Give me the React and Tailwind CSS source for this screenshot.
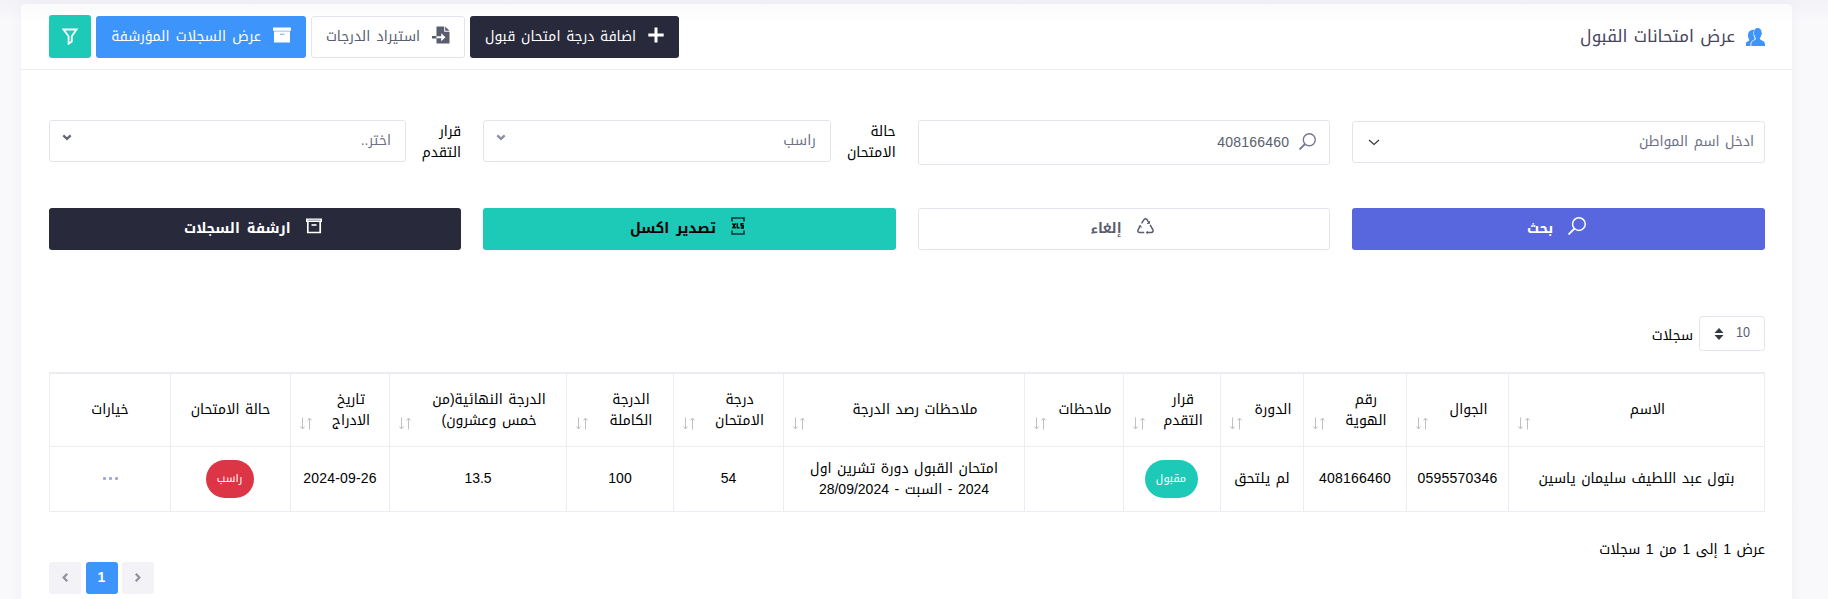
const columns = [
  { label: ["الاسم"], sort: true, width: "w-[256px]" },
  { label: ["الجوال"], sort: true, width: "w-[102px]" },
  { label: ["رقم", "الهوية"], sort: true, width: "w-[103px]" },
  { label: ["الدورة"], sort: true, width: "w-[83px]" },
  { label: ["قرار", "التقدم"], sort: true, width: "w-[97px]" },
  { label: ["ملاحظات"], sort: true, width: "w-[99px]" },
  { label: ["ملاحظات رصد الدرجة"], sort: true, width: "w-[241px]" },
  { label: ["درجة", "الامتحان"], sort: true, width: "w-[110px]" },
  { label: ["الدرجة", "الكاملة"], sort: true, width: "w-[107px]" },
  { label: ["الدرجة النهائية(من", "خمس وعشرون)"], sort: true, width: "w-[177px]" },
  { label: ["تاريخ", "الادراج"], sort: true, width: "w-[99px]" },
  { label: ["حالة الامتحان"], sort: false, width: "w-[120px]" },
  { label: ["خيارات"], sort: false, width: "w-[121px]" },
];

function UsersIcon() {
  return (
    <svg width="19" height="18" viewBox="0 0 19 18" fill="#3d94fb">
      <path d="M6 2c1-.4 1.700-.3 2.300 0C7.300 3.500 7.100 5.500 7.700 7.700c.3 1.300.8 2 1.100 2.700-.3 1.700-3.600 1.900-4.300 5V18H0v-2.400c0-2 3-2.200 3.400-3.500C2.500 11 2.200 9.500 2 8 1.700 5 3 2.600 6 2z" />
      <path d="M11.500 0c2.600 0 4 1.700 4 4.300 0 .4.500.6.400 1.400-.1.800-.5 1.300-.8 1.500-.3 1.500-.8 2.500-1.300 3.200.2 2.200 5.200 2 5.200 5.500V18H5.300v-2.100c0-3.300 4.300-3.400 4.600-5.500-.6-.7-1.100-1.800-1.300-3.200-.4-.2-.7-.7-.8-1.500-.1-.8.200-1 .3-1.400C8 1.700 9.400 0 11.500 0z" />
    </svg>
  );
}

function SearchIcon({ size = 17 }) {
  return (
    <svg width={size} height={size} viewBox="0 0 17 17" fill="none" stroke="currentColor" strokeWidth="1.400">
      <circle cx="10.300" cy="6.700" r="6" />
      <path d="M6 11L.5 16.500" strokeWidth="1.800" />
    </svg>
  );
}

function PlusIcon() {
  return (
    <svg width="16" height="16" viewBox="0 0 16 16" stroke="white" strokeWidth="3">
      <path d="M8 .5v15M.3 8h15.400" />
    </svg>
  );
}

function ImportIcon() {
  return (
    <svg width="18" height="18" viewBox="0 0 18 18" fill="#595d6e">
      <path d="M4.500.5h7.700v5.300H17.500V17.500h-13z" />
      <path d="M13.200.5l4.300 4.300h-4.300z" />
      <path d="M0 10h4.500v2.500H0z" />
      <path d="M4.500 10.200h4.700V7.200l4.300 4-4.300 4v-2.900H4.500z" fill="white" />
    </svg>
  );
}

function BoxSolidIcon() {
  return (
    <svg width="18" height="16" viewBox="0 0 18 16">
      <path d="M0 .5h18v3.300H0z" fill="white" />
      <path d="M1 4h16v1.200H1z" fill="#b9d8fe" />
      <path d="M1 5h16v10.500H1z" fill="white" />
      <path d="M7 6.600h4.500v1.500H7z" fill="#8fc0fd" />
    </svg>
  );
}

function BoxOutlineIcon() {
  return (
    <svg width="16" height="16" viewBox="0 0 16 16">
      <path d="M0 .5h16v3.500H0z" fill="white" />
      <path d="M1.500 2.200h13" stroke="#898b95" strokeWidth="1" />
      <path d="M1.800 3.500v11h12.400v-11" fill="none" stroke="white" strokeWidth="1.700" />
      <path d="M5.500 7h5" stroke="white" strokeWidth="1.600" />
    </svg>
  );
}

function FunnelIcon() {
  return (
    <svg width="16" height="17" viewBox="0 0 16 17" fill="none" stroke="white" strokeWidth="1.800">
      <path d="M1.500 1.500h13L9.800 8.200v5.300L6.600 15.800V8.200z" />
    </svg>
  );
}

function RecycleIcon() {
  return (
    <svg width="17" height="16" viewBox="0 0 17 16" fill="none" stroke="#595d6e" strokeWidth="1.500">
      <path d="M4.600 5.400L7 1.600Q8.500-.2 10 1.600l2 3.300" />
      <path d="M13.100 6.900l2.700 4.600q1 2.300-1.300 3H9.300" />
      <path d="M7.200 14.500H2.500Q0 14 1.200 11.600l2.300-3.900" />
      <path d="M12.500 3v2.500H10M10.800 13l-1.500 1.500 1.500 1.300M1.700 8.400l2-.8.600 2.100" strokeWidth="0.900" />
    </svg>
  );
}

function XlsIcon() {
  return (
    <svg width="14" height="18" viewBox="0 0 14 18" fill="none" stroke="#14333a">
      <path d="M1 4.500V1h12v3.500M1 13.500V17h12v-3.500" strokeWidth="1.600" />
      <path d="M1.600 6.300l2.900 5M4.500 6.300l-2.900 5M6.300 6.300v4.500h2.200M12.600 6.800h-2.400v2h2v2.100H9.700" strokeWidth="1.500" stroke="black" />
    </svg>
  );
}

function Chevron({ className }) {
  return (
    <svg width="10" height="7" viewBox="0 0 10 7" fill="none" stroke="currentColor" strokeWidth="2.300" className={className}>
      <path d="M1.300 1.300L5 4.800l3.700-3.500" />
    </svg>
  );
}

function SortIcon() {
  return (
    <svg width="12" height="13" viewBox="0 0 12 13" fill="none" className="absolute bottom-[16px] left-[9px]">
      <path d="M2.500.5v11M.5 9.500l2 2.500 2-2.500" stroke="#bfbfc4" />
      <path d="M9.500 12.500V1.500M7.500 3.500l2-2.500 2 2.500" stroke="#bfbfc4" />
    </svg>
  );
}

function HeaderButton({ className, icon, children }) {
  return (
    <button className={`flex h-[42px] items-center justify-center gap-3 rounded-[3px] ${className}`}>
      <span className="-mt-[4px]">{icon}</span>
      <span className="-mt-[2px]">{children}</span>
    </button>
  );
}

function ActionButton({ className, icon, children }) {
  return (
    <button className={`flex h-[42px] items-center justify-center gap-[15px] rounded-[3px] pr-[4px] font-bold [word-spacing:3px] ${className}`}>
      <span className="-mt-[6px]">{icon}</span>
      <span className="-mt-[2px]">{children}</span>
    </button>
  );
}

function Cell({ children }) {
  return <td className="border border-[#ebedf2] p-0 text-center align-middle">{children}</td>;
}

export default function App() {
  return (
    <div
      dir="rtl"
      className="h-[599px] overflow-hidden bg-[#f9f9fc] bg-gradient-to-b from-[#f2f2f7] to-[#f9f9fc] to-[20px] pt-1 pr-9 pl-[21px] font-['Liberation_Sans','Noto_Kufi_Arabic','DejaVu_Sans',sans-serif] text-[14px] leading-[21px] text-black [word-spacing:1.6px]"
    >
      <div className="h-[640px] rounded bg-gradient-to-b from-[#fbfbfc] to-white to-[22px] shadow-[0_0_13px_0_rgba(82,63,105,0.05)]">
        <header className="flex h-[66px] items-start justify-between border-b border-[#ebedf2] pr-[27px] pl-7">
          <div className="flex items-center gap-[11px] pt-[22px]">
            <UsersIcon />
            <h1 className="text-[17px] text-[#48465b]">عرض امتحانات القبول</h1>
          </div>
          <div className="flex items-end gap-[5px] pt-[11px]">
            <HeaderButton className="w-[209px] bg-[#282a3c] text-white [word-spacing:1.8px]" icon={<PlusIcon />}>اضافة درجة امتحان قبول</HeaderButton>
            <HeaderButton className="w-[154px] border border-[#e2e5ec] bg-white text-[#595d6e] [word-spacing:2.4px]" icon={<ImportIcon />}>استيراد الدرجات</HeaderButton>
            <HeaderButton className="w-[210px] bg-[#3d94fb] text-white [word-spacing:2.4px]" icon={<BoxSolidIcon />}>عرض السجلات المؤرشفة</HeaderButton>
            <button className="flex h-[43px] w-[42px] items-center justify-center rounded-[3px] bg-[#1dc9b7]">
              <FunnelIcon />
            </button>
          </div>
        </header>

        <main className="pr-[27px] pl-7">
          <section className="-ml-[0.5px] grid h-[138px] grid-cols-4 items-start gap-x-[22px] pt-[50px]">
            <div className="mt-px flex h-[42px] items-center justify-between rounded-[3px] border border-[#e2e5ec] bg-white pr-[10px] pl-[15px] text-[#6d7186]">
              <span className="-mt-px">ادخل اسم المواطن</span>
              <svg width="12" height="7" viewBox="0 0 12 7" fill="none" stroke="#343a40" strokeWidth="1.200">
                <path d="M1 1l5 4.500L11 1" />
              </svg>
            </div>
            <div className="flex h-[45px] items-center gap-[10px] rounded-[3px] border border-[#e2e5ec] bg-white pr-[13px] text-[#74788d]">
              <span className="-mt-[3px]"><SearchIcon /></span>
              <span className="tracking-[0.22px] text-[#595d6e]">408166460</span>
            </div>
            <div className="flex items-start">
              <label className="w-[65px] pt-px">حالة<br />الامتحان</label>
              <div className="flex h-[42px] flex-1 items-center justify-between rounded-[3px] border border-[#e2e5ec] bg-white pr-[14px] pl-[12px] text-[#6d7186]">
                <span className="-mt-[2px]">راسب</span>
                <Chevron className="-mt-[7px] text-[#8d8fa3]" />
              </div>
            </div>
            <div className="flex items-start">
              <label className="w-[55px] pt-px">قرار<br />التقدم</label>
              <div className="flex h-[42px] flex-1 items-center justify-between rounded-[3px] border border-[#e2e5ec] bg-white pr-[14px] pl-[12px] text-[#6d7186]">
                <span className="-mt-[2px]">اختر..</span>
                <Chevron className="-mt-[7px] text-[#646776]" />
              </div>
            </div>
          </section>

          <section className="-ml-[0.5px] grid grid-cols-4 gap-x-[22px]">
            <ActionButton className="bg-[#5867dd] text-white" icon={<SearchIcon size={18} />}>بحث</ActionButton>
            <ActionButton className="border border-[#e2e5ec] bg-white text-[#595d6e]" icon={<RecycleIcon />}>إلغاء</ActionButton>
            <ActionButton className="bg-[#1dc9b7] text-black" icon={<XlsIcon />}>تصدير اكسل</ActionButton>
            <ActionButton className="bg-[#282a3c] text-white" icon={<BoxOutlineIcon />}>ارشفة السجلات</ActionButton>
          </section>

          <div className="mt-[66px] flex items-center gap-[6px]">
            <div className="flex h-[35px] w-[66px] items-center gap-[12px] rounded-[3px] border border-[#e2e5ec] pr-[14px] text-[14px] text-[#595d6e]">
              <span className="-mt-[3px] w-[14px] origin-right scale-x-90">10</span>
              <svg width="10" height="12" viewBox="0 0 10 12" fill="#343a40">
                <path d="M5 0l4.500 5h-9zM5 12L.5 7h9z" />
              </svg>
            </div>
            <span className="pt-[4px]">سجلات</span>
          </div>

          <table className="mt-[21px] w-[1715px] table-fixed border-collapse border border-[#ebedf2]">
            <thead>
              <tr className="h-[73px]">
                {columns.map((col) => (
                  <th
                    key={col.label.join(" ")}
                    className={`relative border border-t-2 border-[#ebedf2] p-0 text-center font-normal ${col.width}`}
                  >
                    <div className={col.sort ? "translate-x-[11px]" : ""}>
                      {col.label.map((line) => (
                        <div key={line} className="whitespace-nowrap">{line}</div>
                      ))}
                    </div>
                    {col.sort && <SortIcon />}
                  </th>
                ))}
              </tr>
            </thead>
            <tbody>
              <tr className="h-[65px]">
                <Cell>بتول عبد اللطيف سليمان ياسين</Cell>
                <Cell><span className="tracking-[0.22px]">0595570346</span></Cell>
                <Cell><span className="tracking-[0.22px]">408166460</span></Cell>
                <Cell>لم يلتحق</Cell>
                <Cell>
                  <span className="mx-auto flex h-[38px] w-[53px] -translate-x-px items-center justify-center rounded-[19px] bg-[#1dc9b7] text-[11px] text-white">مقبول</span>
                </Cell>
                <Cell />
                <Cell>امتحان القبول دورة تشرين اول<br />2024 - السبت - <bdi className="tracking-[0.2px]">28/09/2024</bdi></Cell>
                <Cell>54</Cell>
                <Cell>100</Cell>
                <Cell>13.5</Cell>
                <Cell><bdi dir="ltr" className="tracking-[0.2px]">2024-09-26</bdi></Cell>
                <Cell>
                  <span className="mx-auto flex h-[38px] w-[48px] -translate-x-px items-center justify-center rounded-[19px] bg-[#dc3545] text-[11px] text-white">راسب</span>
                </Cell>
                <Cell>
                  <div className="flex justify-center gap-[3px]">
                    <i className="size-[3px] rounded-[1px] bg-[#a2a5e0]" />
                    <i className="size-[3px] rounded-[1px] bg-[#a2a5e0]" />
                    <i className="size-[3px] rounded-[1px] bg-[#a2a5e0]" />
                  </div>
                </Cell>
              </tr>
            </tbody>
          </table>

          <p className="mt-[27px]">عرض 1 إلى 1 من 1 سجلات</p>
          <nav className="mt-[2px] flex justify-end gap-[4.5px]">
            <button className="flex size-8 items-center justify-center rounded-[3px] bg-[#f2f2f7] text-[#93939f]">
              <Chevron className="-rotate-90" />
            </button>
            <button className="flex size-8 items-center justify-center rounded-[3px] bg-[#3d94fb] font-bold text-white">
              <span className="-mt-px">1</span>
            </button>
            <button className="flex size-8 items-center justify-center rounded-[3px] bg-[#f2f2f7] text-[#93939f]">
              <Chevron className="rotate-90" />
            </button>
          </nav>
        </main>
      </div>
    </div>
  );
}
